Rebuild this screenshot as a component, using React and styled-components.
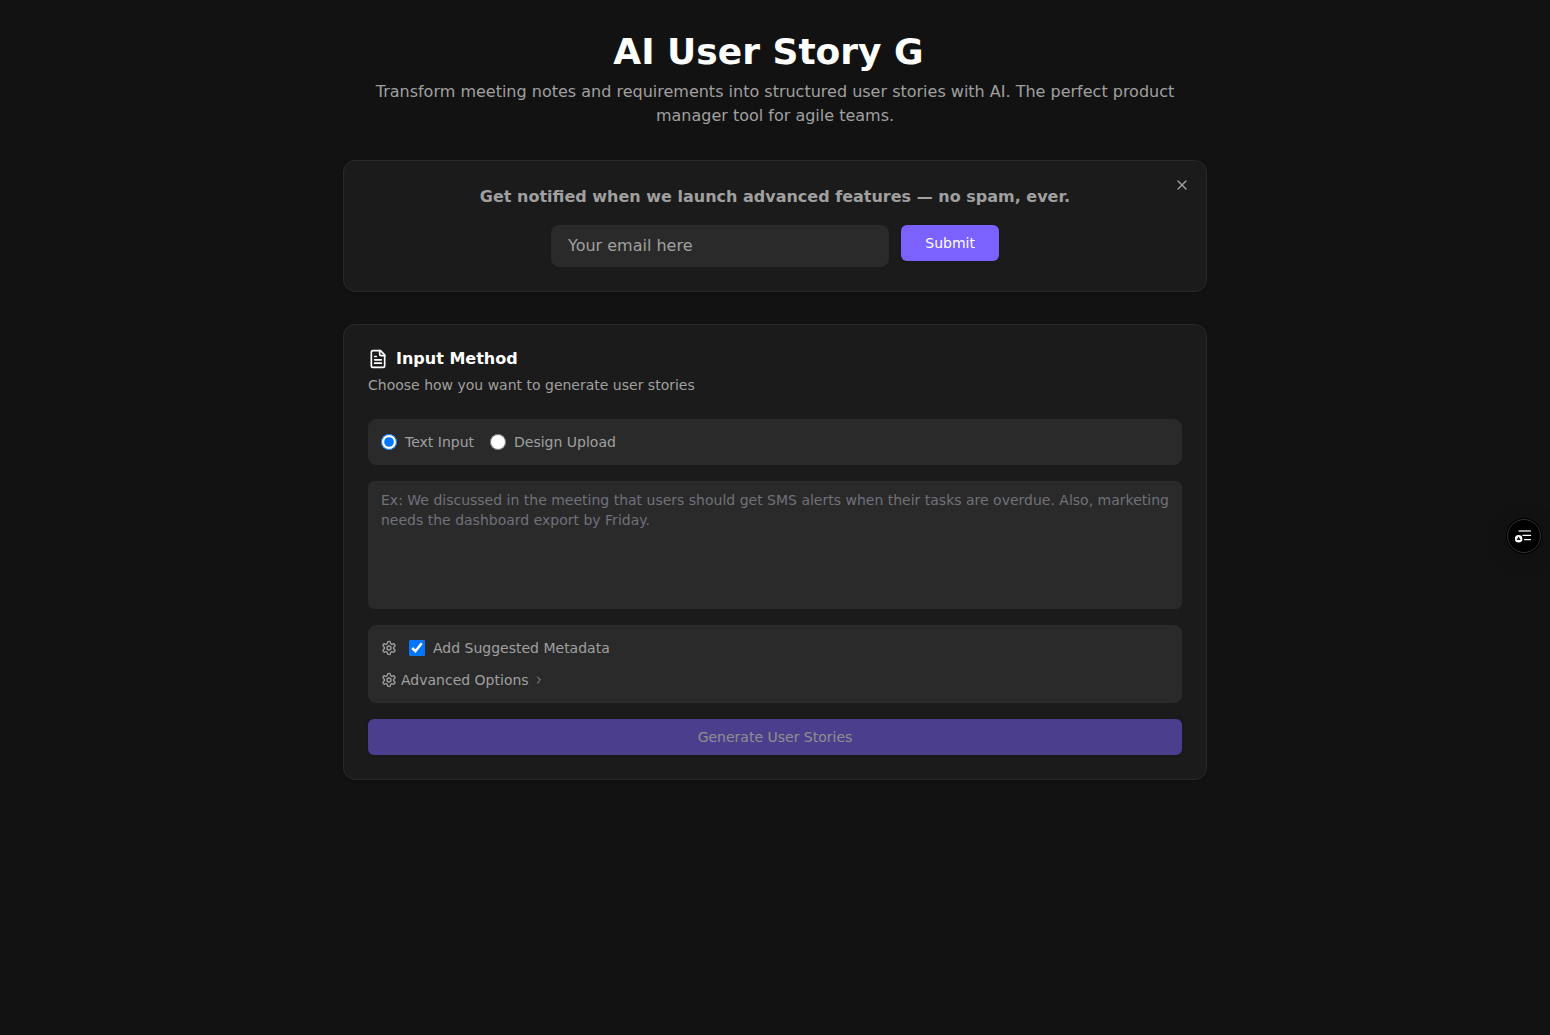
import React, { useState } from "react";
import styled, { createGlobalStyle } from "styled-components";
import { ChevronRight, X } from "lucide-react";

const GlobalStyle = createGlobalStyle`
  *, *::before, *::after { box-sizing: border-box; }
  body {
    margin: 0;
    background: #121212;
    color: #ffffff;
    font-family: "DejaVu Sans", sans-serif;
    font-size: 16px;
    line-height: 24px;
  }
  h1, h2, p { margin: 0; }
  button, input, textarea { font-family: inherit; }
`;

const Page = styled.main`
  display: flex;
  flex-direction: column;
  gap: 32px;
  max-width: 896px;
  margin: 0 auto;
  padding: 32px 16px;
`;

const Header = styled.header`
  display: flex;
  flex-direction: column;
  gap: 8px;
  text-align: center;
`;

const Title = styled.h1`
  font-size: 36px;
  line-height: 40px;
  font-weight: 700;
`;

const Caret = styled.span`
  display: inline-block;
  width: 13px;
`;

const Lead = styled.p`
  color: #a0a0a0;
`;

const Card = styled.section`
  position: relative;
  display: flex;
  flex-direction: column;
  gap: 16px;
  padding: 24px;
  border: 1px solid #2a2a2a;
  border-radius: 12px;
  background: #1b1b1b;
  box-shadow: 0 1px 3px rgba(0, 0, 0, 0.3);
`;

const NotifyTitle = styled.p`
  color: #a0a0a0;
  font-weight: 600;
  text-align: center;
`;

const CloseButton = styled.button`
  position: absolute;
  top: 16px;
  right: 16px;
  display: flex;
  padding: 0;
  border: 0;
  background: none;
  color: #a0a0a0;
  cursor: pointer;
`;

const NotifyForm = styled.form`
  display: flex;
  align-items: flex-start;
  gap: 12px;
  width: 100%;
  max-width: 448px;
  margin: 0 auto;
`;

const EmailInput = styled.input`
  flex: 1;
  min-width: 0;
  padding: 8px 16px;
  border: 1px solid #2a2a2a;
  border-radius: 8px;
  background: #2a2a2a;
  color: #ffffff;
  font-size: 16px;
  line-height: 24px;
  &::placeholder { color: #a0a0a0; opacity: 1; }
`;

const Button = styled.button`
  padding: 8px 24px;
  border: 0;
  border-radius: 6px;
  background: #7b61ff;
  color: #ffffff;
  font-size: 14px;
  line-height: 20px;
  font-weight: 500;
  box-shadow: 0 1px 3px rgba(0, 0, 0, 0.15);
  cursor: pointer;
  &:disabled {
    opacity: 0.5;
    cursor: default;
  }
`;

const CardHeader = styled.div`
  display: flex;
  flex-direction: column;
  gap: 6px;
  margin-bottom: 8px;
`;

const CardTitle = styled.h2`
  display: flex;
  align-items: center;
  gap: 8px;
  font-size: 16px;
  line-height: 20px;
  font-weight: 600;
`;

const Hint = styled.p`
  color: #a0a0a0;
  font-size: 14px;
  line-height: 20px;
`;

const Panel = styled.div`
  display: flex;
  flex-direction: ${({ $stack }) => ($stack ? "column" : "row")};
  gap: ${({ $stack }) => ($stack ? 12 : 16)}px;
  padding: 12px;
  border: 1px solid #2a2a2a;
  border-radius: 8px;
  background: #2a2a2a;
  color: #a0a0a0;
  font-size: 14px;
  line-height: 20px;
`;

const PanelRow = styled.div`
  display: flex;
  align-items: center;
  gap: 12px;
`;

const Choice = styled.label`
  display: flex;
  align-items: center;
  gap: 8px;
  input {
    width: 16px;
    height: 16px;
    margin: 0;
  }
`;

const Notes = styled.textarea`
  display: block;
  width: 100%;
  height: 128px;
  padding: 8px 12px;
  border: 1px solid #2a2a2a;
  border-radius: 6px;
  background: #2a2a2a;
  color: #ffffff;
  font-size: 14px;
  line-height: 20px;
  resize: none;
  &::placeholder { color: #71717a; opacity: 1; }
`;

const Disclosure = styled.button`
  display: flex;
  align-items: center;
  align-self: flex-start;
  gap: 4px;
  padding: 0;
  border: 0;
  background: none;
  color: #a0a0a0;
  font-size: 14px;
  line-height: 20px;
  cursor: pointer;
`;

const FloatingButton = styled.button`
  position: fixed;
  top: 519px;
  right: 9px;
  display: flex;
  align-items: center;
  justify-content: center;
  width: 34px;
  height: 34px;
  padding: 0;
  border: 1px solid #333333;
  border-radius: 50%;
  background: #000000;
  box-shadow: 0 0 0 1px #000000, 0 4px 24px rgba(0, 0, 0, 0.2);
  cursor: pointer;
`;

const StrokeSvg = styled.svg.attrs({ viewBox: "0 0 24 24", "aria-hidden": true })`
  flex: none;
  width: ${({ $size }) => $size}px;
  height: ${({ $size }) => $size}px;
  fill: none;
  stroke: currentColor;
  stroke-width: 2;
  stroke-linecap: round;
  stroke-linejoin: round;
`;

function GearIcon() {
  return (
    <StrokeSvg $size={16}>
      <path d="M12.22 2h-.44a2 2 0 0 0-2 2v.18a2 2 0 0 1-1 1.73l-.43.25a2 2 0 0 1-2 0l-.15-.08a2 2 0 0 0-2.73.73l-.22.38a2 2 0 0 0 .73 2.73l.15.1a2 2 0 0 1 1 1.72v.51a2 2 0 0 1-1 1.74l-.15.09a2 2 0 0 0-.73 2.73l.22.38a2 2 0 0 0 2.73.73l.15-.08a2 2 0 0 1 2 0l.43.25a2 2 0 0 1 1 1.73V20a2 2 0 0 0 2 2h.44a2 2 0 0 0 2-2v-.18a2 2 0 0 1 1-1.73l.43-.25a2 2 0 0 1 2 0l.15.08a2 2 0 0 0 2.73-.73l.22-.39a2 2 0 0 0-.73-2.73l-.15-.08a2 2 0 0 1-1-1.74v-.5a2 2 0 0 1 1-1.74l.15-.09a2 2 0 0 0 .73-2.73l-.22-.38a2 2 0 0 0-2.73-.73l-.15.08a2 2 0 0 1-2 0l-.43-.25a2 2 0 0 1-1-1.73V4a2 2 0 0 0-2-2z" />
      <circle cx="12" cy="12" r="3" />
    </StrokeSvg>
  );
}

function DocumentIcon() {
  return (
    <StrokeSvg $size={20}>
      <path d="M15 2H6a2 2 0 0 0-2 2v16a2 2 0 0 0 2 2h12a2 2 0 0 0 2-2V7Z" />
      <path d="M14 2v4a2 2 0 0 0 2 2h4M10 9H8M16 13H8M16 17H8" />
    </StrokeSvg>
  );
}

function OutlineIcon() {
  return (
    <svg width="18" height="18" viewBox="0 0 18 18" fill="none" aria-hidden="true">
      <path d="M4 4h11.5" stroke="#d0d0d0" strokeWidth="1.3" strokeLinecap="round" />
      <path d="M8 8.4h7.5M9.5 12.6h6" stroke="#ffffff" strokeWidth="1.3" strokeLinecap="round" />
      <circle cx="3.6" cy="11.8" r="3.8" fill="#ffffff" />
      <path d="M3.6 9.6 5.6 12.9h-4z" fill="#111111" />
    </svg>
  );
}

export default function App() {
  const [method, setMethod] = useState("text");
  const [metadata, setMetadata] = useState(true);
  const [notes, setNotes] = useState("");
  const [showNotify, setShowNotify] = useState(true);

  return (
    <>
      <GlobalStyle />
      <Page>
        <Header>
          <Title>AI User Story G<Caret /></Title>
          <Lead>
            Transform meeting notes and requirements into structured user stories with AI. The perfect product
            manager tool for agile teams.
          </Lead>
        </Header>

        {showNotify && (
          <Card>
            <CloseButton type="button" aria-label="Close" onClick={() => setShowNotify(false)}>
              <X size={16} />
            </CloseButton>
            <NotifyTitle>Get notified when we launch advanced features — no spam, ever.</NotifyTitle>
            <NotifyForm onSubmit={(e) => e.preventDefault()}>
              <EmailInput type="email" aria-label="Email" placeholder="Your email here" />
              <Button type="submit">Submit</Button>
            </NotifyForm>
          </Card>
        )}

        <Card>
          <CardHeader>
            <CardTitle><DocumentIcon />Input Method</CardTitle>
            <Hint>Choose how you want to generate user stories</Hint>
          </CardHeader>

          <Panel role="radiogroup" aria-label="Input Method">
            <Choice>
              <input type="radio" name="method" checked={method === "text"} onChange={() => setMethod("text")} />
              Text Input
            </Choice>
            <Choice>
              <input type="radio" name="method" checked={method === "design"} onChange={() => setMethod("design")} />
              Design Upload
            </Choice>
          </Panel>

          <Notes
            aria-label="Meeting notes"
            value={notes}
            onChange={(e) => setNotes(e.target.value)}
            placeholder="Ex: We discussed in the meeting that users should get SMS alerts when their tasks are overdue. Also, marketing needs the dashboard export by Friday."
          />

          <Panel $stack>
            <PanelRow>
              <GearIcon />
              <Choice>
                <input type="checkbox" checked={metadata} onChange={(e) => setMetadata(e.target.checked)} />
                Add Suggested Metadata
              </Choice>
            </PanelRow>
            <Disclosure type="button">
              <GearIcon />
              Advanced Options
              <ChevronRight size={12} />
            </Disclosure>
          </Panel>

          <Button type="button" disabled={notes.trim() === ""}>Generate User Stories</Button>
        </Card>
      </Page>

      <FloatingButton type="button" aria-label="Open outline"><OutlineIcon /></FloatingButton>
    </>
  );
}
